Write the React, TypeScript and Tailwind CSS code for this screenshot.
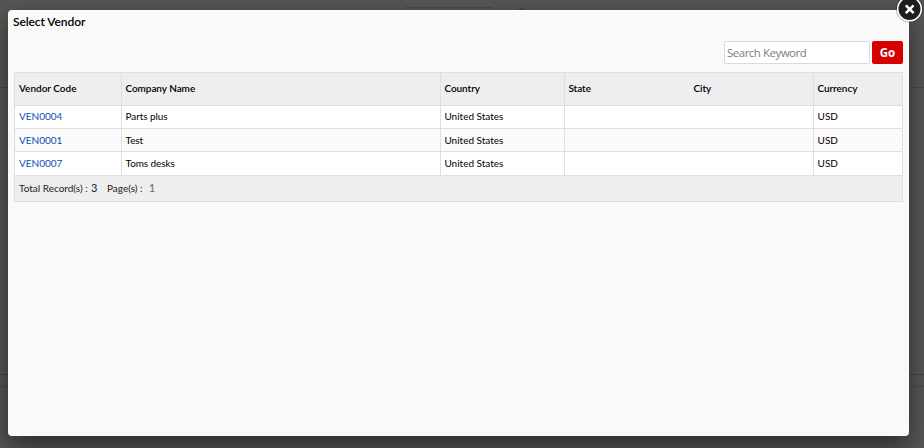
const columns = ["Vendor Code", "Company Name", "Country", "State", "City", "Currency"];
const vendors = [
  { code: "VEN0004", company: "Parts plus", style: "h-[23px] bg-white leading-[21px]" },
  { code: "VEN0001", company: "Test", style: "h-[23px] bg-[#fafafa] leading-[23px]" },
  { code: "VEN0007", company: "Toms desks", style: "h-[24px] bg-white leading-[23px]" },
];
const grid = "grid grid-cols-[107px_319px_124px_125px_124px_88px]";
const divider = "border-r border-[#dfdfdf]";

function CloseButton() {
  return (
    <button aria-label="Close" className="absolute -top-[15px] -right-[15px] size-[28px]">
      <svg viewBox="0 0 28 28" className="size-full">
        <circle cx="13.5" cy="14" r="13.5" fill="#000" opacity=".3" />
        <circle cx="13.5" cy="14" r="11.8" fill="#1e1e1e" stroke="#fff" strokeWidth="1.6" />
        <path d="M10.7 11.2l6 6M16.7 11.2l-6 6" stroke="#fff" strokeWidth="2.5" strokeLinecap="square" />
      </svg>
    </button>
  );
}

export default function App() {
  return (
    <div className="relative h-[448px] w-[924px] overflow-hidden bg-[#575654] pt-[10px] pl-[8px] font-['Lato','Noto_Sans',sans-serif] text-[10px] text-black">
      <div className="absolute inset-x-0 top-[87px] h-px bg-[#494846]" />
      <div className="absolute inset-x-0 top-[374px] h-px bg-[#454443]" />
      <div className="absolute inset-x-0 top-[386px] h-px bg-[#4c4b4a]" />
      <div className="absolute top-[7px] left-[404px] h-3 w-[89px] rounded-xs border border-[#4a4947]" />
      <div className="absolute top-[8px] left-[518px] size-[7px] rounded-full bg-[#41434b]" />
      <main className="relative h-[426px] w-[901px] rounded-[4px] bg-[#f9f9f9] pr-[6px] pl-[6px] shadow-[0_10px_25px_rgba(0,0,0,0.5)]">
        <CloseButton />
        <h1 className="-ml-px h-[31px] pt-[4px] text-[12px] leading-[16px] font-semibold tracking-[-0.08px]">Select Vendor</h1>
        <div className="flex h-[31px] justify-end gap-[2px] font-['Open_Sans','Noto_Sans',sans-serif]">
          <input
            placeholder="Search Keyword"
            className="h-[23px] w-[146px] rounded-[2px] border border-[#d5dce8] bg-white px-[2px] text-[11.5px] tracking-[-0.5px] placeholder:text-[#808080]"
          />
          <button className="h-[23px] w-[31px] rounded-[2px] bg-[#d60000] text-[11.5px] font-bold text-white">Go</button>
        </div>
        <section className="w-[889px] border border-[#dfdfdf] bg-[#eee]">
          <div className={`${grid} h-[33px] items-stretch border-b border-[#dfdfdf] font-semibold`}>
            {columns.map((name, i) => (
              <div key={name} className={`flex items-center pb-[2px] ${i === 0 ? "pl-[4px]" : "pl-[3.4px] tracking-[-0.05px]"} ${name === "State" || name === "Currency" ? "" : divider}`}>
                {name}
              </div>
            ))}
          </div>
          {vendors.map((v) => (
            <div key={v.code} className={`${grid} ${v.style} border-b border-[#dfdfdf]`}>
              <a className={`pl-[4px] text-[#0b50b0] ${divider}`}>{v.code}</a>
              <div className={`pl-[3.6px] tracking-[-0.1px] ${divider}`}>{v.company}</div>
              <div className={`pl-[3.4px] ${divider}`}>United States</div>
              <div />
              <div className={divider} />
              <div className="pl-[3.6px]">USD</div>
            </div>
          ))}
          <footer className="flex h-[25px] items-center pl-[4px] whitespace-nowrap text-[#222]">
            <span className="w-[72px]">Total Record(s) :</span>
            <span className="w-[16px] text-[11px]">3</span>
            <span className="w-[42px]">Page(s) :</span>
            <span className="text-[10.5px] font-semibold text-[#777]">1</span>
          </footer>
        </section>
      </main>
    </div>
  );
}
